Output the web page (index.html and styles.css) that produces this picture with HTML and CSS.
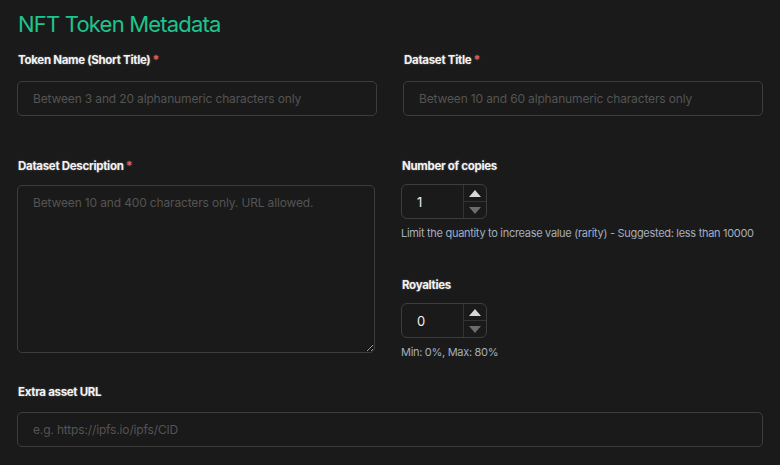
FILE: index.html
```html
<!DOCTYPE html>
<html>
<head>
<meta charset="utf-8">
<link rel="stylesheet" href="styles.css">
</head>
<body>
<div class="page">
  <h1 class="title">NFT Token Metadata</h1>
  <div class="row row-top">
    <div class="field">
      <label class="label">Token Name (Short Title) <span class="req">*</span></label>
      <input class="input" type="text" placeholder="Between 3 and 20 alphanumeric characters only">
    </div>
    <div class="field field-right">
      <label class="label">Dataset Title <span class="req">*</span></label>
      <input class="input" type="text" placeholder="Between 10 and 60 alphanumeric characters only">
    </div>
  </div>
  <div class="row row-mid">
    <div class="field field-desc">
      <label class="label">Dataset Description <span class="req">*</span></label>
      <textarea class="textarea" placeholder="Between 10 and 400 characters only. URL allowed."></textarea>
    </div>
    <div class="side">
      <div class="field">
        <label class="label">Number of copies</label>
        <div class="number">
          <span class="num-value">1</span>
          <div class="spin">
            <span class="spin-btn"><span class="tri tri-up"></span></span>
            <span class="spin-btn"><span class="tri tri-down"></span></span>
          </div>
        </div>
        <p class="help">Limit the quantity to increase value (rarity) - Suggested: less than 10000</p>
      </div>
      <div class="field field-roy">
        <label class="label">Royalties</label>
        <div class="number">
          <span class="num-value">0</span>
          <div class="spin">
            <span class="spin-btn"><span class="tri tri-up"></span></span>
            <span class="spin-btn"><span class="tri tri-down"></span></span>
          </div>
        </div>
        <p class="help">Min: 0%, Max: 80%</p>
      </div>
    </div>
  </div>
  <div class="field field-extra">
    <label class="label">Extra asset URL</label>
    <input class="input" type="text" placeholder="e.g. https://ipfs.io/ipfs/CID">
  </div>
</div>
</body>
</html>
```

FILE: styles.css
```css
* { box-sizing: border-box; }
html, body {
  margin: 0;
  padding: 0;
  background: #1a1a1a;
  width: 780px;
  height: 465px;
  overflow: hidden;
}
body {
  font-family: Inter, "Noto Sans", sans-serif;
  color: #e6e6e6;
}
.page {
  padding: 11px 17px 0 17px;
}
.title {
  margin: 0 0 0 1px;
  font-size: 22px;
  font-weight: 400;
  line-height: 26px;
  color: #1ec48f;
  letter-spacing: -0.8px;
}
.row {
  display: flex;
}
.row-top {
  margin-top: 16px;
  gap: 26px;
}
.row-top .field { width: 360px; }
.field {
  display: flex;
  flex-direction: column;
}
.label {
  font-size: 11.5px;
  font-weight: 700;
  line-height: 14px;
  color: #f2f2f2;
  letter-spacing: -0.3px;
  margin-left: 1px;
  text-shadow: 0 0 2px rgba(255,255,255,0.35);
}
.req { color: #e05a5a; }
.input {
  margin-top: 14px;
  height: 35px;
  width: 100%;
  background: #1a1a1a;
  border: 1px solid #3d3d3d;
  border-radius: 5px;
  padding: 0 15px;
  font-family: inherit;
  font-size: 12px;
  letter-spacing: -0.15px;
  color: #ddd;
  outline: none;
}
.input::placeholder, .textarea::placeholder {
  color: #545454;
}
.row-mid {
  margin-top: 43px;
  gap: 26px;
}
.field-desc { width: 358px; }
.textarea {
  margin-top: 12px;
  width: 358px;
  height: 168px;
  background: #1a1a1a;
  border: 1px solid #3d3d3d;
  border-radius: 5px;
  padding: 9px 15px;
  font-family: inherit;
  font-size: 12px;
  letter-spacing: -0.15px;
  color: #ddd;
  outline: none;
  resize: vertical;
}
.side {
  display: flex;
  flex-direction: column;
  width: 380px;
}
.number {
  margin-top: 11px;
  width: 86px;
  height: 35px;
  border: 1px solid #3d3d3d;
  border-radius: 6px;
  display: flex;
  align-items: stretch;
}
.num-value {
  flex: 1;
  display: flex;
  align-items: center;
  padding-left: 15px;
  font-size: 13px;
  color: #f0f0f0;
}
.spin {
  width: 23px;
  border-left: 1px solid #333;
  display: flex;
  flex-direction: column;
}
.spin-btn {
  flex: 1;
  display: flex;
  align-items: center;
  justify-content: center;
}
.spin-btn + .spin-btn { border-top: 1px solid #333; }
.tri {
  width: 0;
  height: 0;
  border-left: 6px solid transparent;
  border-right: 6px solid transparent;
}
.tri-up { border-bottom: 7px solid #d8d8d8; }
.tri-down { border-top: 7px solid #6c6c6c; }
.help {
  margin: 8px 0 0 0;
  font-size: 11px;
  line-height: 13px;
  color: #a4aebe;
  letter-spacing: -0.3px;
  white-space: nowrap;
}
.field-roy { margin-top: 38px; }
.field-extra {
  margin-top: 26px;
  width: 746px;
}
.field-extra .input { margin-top: 13px; }
```
